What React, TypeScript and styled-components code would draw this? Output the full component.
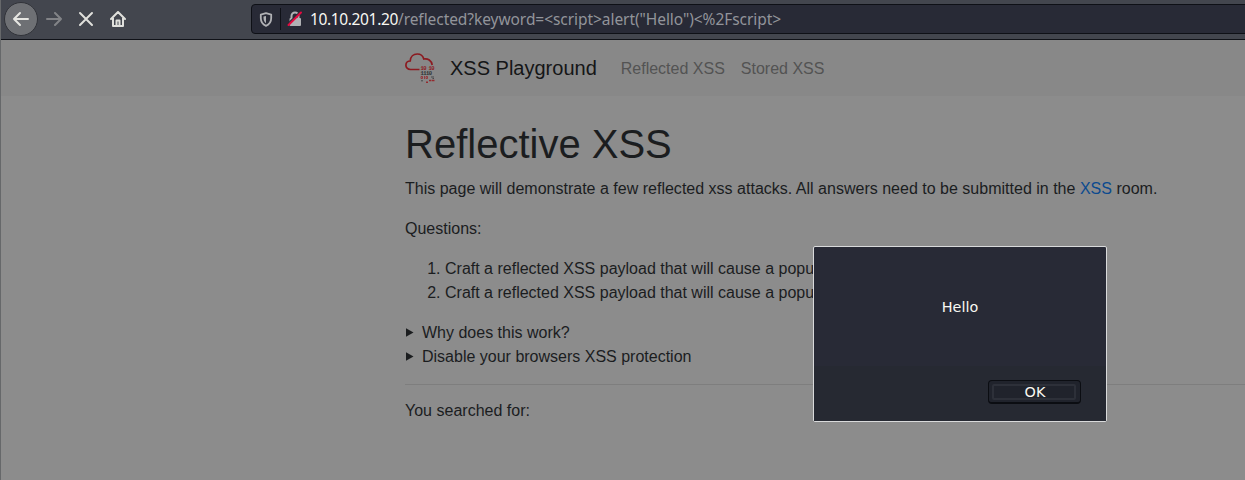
import React from "react";
import styled, { createGlobalStyle } from "styled-components";

const GlobalStyle = createGlobalStyle`
  *, *::before, *::after { box-sizing: border-box; }
  html, body { margin: 0; height: 100%; overflow: hidden; background: #8c8c8c; }
  body { font: 16px/24px "Liberation Sans", Arial, sans-serif; color: #1b1d1f; }
`;

const Browser = styled.div`
  position: relative;
  width: 1245px;
  height: 480px;
  overflow: hidden;
  display: flex;
  flex-direction: column;
  border-left: 1px solid #66686a;
`;

const Toolbar = styled.header`
  flex: none;
  height: 40px;
  display: flex;
  align-items: flex-start;
  background: #43464e;
  border-bottom: 1px solid #101218;
`;

const BackButton = styled.button`
  width: 34px;
  height: 34px;
  margin: 2px 0 0 3px;
  padding: 0;
  border: 1px solid #313339;
  border-radius: 50%;
  background: #6e7074;
  display: flex;
  align-items: center;
  justify-content: center;
`;

const ToolButton = styled.button<{ $dim?: boolean }>`
  width: 32px;
  height: 38px;
  padding: 0;
  border: 0;
  background: none;
  display: flex;
  align-items: center;
  justify-content: center;
  opacity: ${(p) => (p.$dim ? 0.4 : 1)};
`;

const AddressBar = styled.div`
  flex: 1;
  height: 30px;
  margin: 4px -6px 0 117px;
  padding-left: 7px;
  display: flex;
  align-items: center;
  background: #282a36;
  border: 1px solid #0e1016;
  border-radius: 4px;
`;

const Divider = styled.span`
  width: 1px;
  height: 22px;
  margin: 0 6px 0 7px;
  background: #0e1016;
`;

const Url = styled.span`
  margin-left: 7px;
  font: 15.5px/28px "Noto Sans", sans-serif;
  letter-spacing: -0.06px;
  color: #92949a;
  white-space: pre;
`;

const Host = styled.span`
  color: #f8f8f2;
  letter-spacing: -0.36px;
`;

const Navbar = styled.nav`
  flex: none;
  height: 56px;
  padding-left: 404px;
  display: flex;
  align-items: center;
  background: #888888;
`;

const Brand = styled.a`
  display: flex;
  align-items: center;
  gap: 15px;
  margin-right: 24px;
  font-size: 20px;
  line-height: 30px;
  color: #151617;
`;

const NavLink = styled.a`
  margin-right: 16px;
  padding-top: 2px;
  color: #535353;
`;

const Page = styled.main`
  flex: 1;
  padding: 24px 0 0 404px;
  background: #8c8c8c;
`;

const Title = styled.h1`
  margin: 0 0 9px;
  font-size: 40px;
  line-height: 48px;
  font-weight: 400;
`;

const Paragraph = styled.p`
  margin: 0 0 16px;
  letter-spacing: 0.008px;
`;

const Link = styled.a`
  color: #0b4a8f;
`;

const Questions = styled.ol`
  margin: 0 0 16px;
  padding-left: 40px;
  white-space: nowrap;
`;

const Disclosure = styled.div`
  display: flex;
  align-items: center;
  gap: 8px;
`;

const Rule = styled.hr`
  margin: 15px 0 13px;
  border: 0;
  border-top: 1px solid #7e7e7e;
`;

const Results = styled(Paragraph)`
  padding-top: 1px;
`;

const Dialog = styled.div`
  position: absolute;
  left: 812px;
  top: 246px;
  width: 294px;
  height: 176px;
  display: flex;
  flex-direction: column;
  background: #282a36;
  border: 1px solid #d9dadb;
  border-radius: 2px;
  font: 14.4px/20px "DejaVu Sans", sans-serif;
  color: #f8f8f2;
`;

const Message = styled.div`
  flex: 1;
  display: flex;
  align-items: center;
  justify-content: center;
`;

const Actions = styled.div`
  height: 55px;
  padding: 14px 25px 0 0;
  display: flex;
  justify-content: flex-end;
  align-items: flex-start;
  background: #262932;
`;

const OkButton = styled.button`
  width: 93px;
  height: 24px;
  padding: 3px 4px 2px 3px;
  border: 1px solid #0b0d12;
  border-bottom-width: 2px;
  border-radius: 4px;
  background: #20232c;
  color: inherit;
  font: inherit;
`;

const OkLabel = styled.span`
  display: block;
  height: 16px;
  padding-left: 2px;
  line-height: 13px;
  border: 2px solid #2d3039;
  border-radius: 2px;
`;

const BackIcon = () => (
  <svg width="18" height="16" viewBox="0 0 18 16" fill="none" stroke="#e6e6e2" strokeWidth="2" strokeLinecap="round" strokeLinejoin="round">
    <path d="M16 8H2M8 2L2 8l6 6" />
  </svg>
);

const ForwardIcon = () => (
  <svg width="18" height="16" viewBox="0 0 18 16" fill="none" stroke="#e0e0dc" strokeWidth="2" strokeLinecap="round" strokeLinejoin="round">
    <path d="M2 8h14M10 2l6 6-6 6" />
  </svg>
);

const StopIcon = () => (
  <svg width="16" height="16" viewBox="0 0 16 16" stroke="#e0e0dc" strokeWidth="2" strokeLinecap="round">
    <path d="M2 2l12 12M14 2L2 14" />
  </svg>
);

const HomeIcon = () => (
  <svg width="16" height="16" viewBox="0 0 16 16" fill="none" stroke="#e0e0dc" strokeWidth="2" strokeLinecap="round" strokeLinejoin="round">
    <path d="M1 8l7-7 7 7M3 7v8h10V7" />
    <path d="M6.5 14.5V9.5h3v5" />
  </svg>
);

const ShieldIcon = () => (
  <svg width="14" height="15" viewBox="0 0 14 15" fill="none">
    <path d="M7 1.2L12.2 2.6V6c0 3.8-2 6.5-5.2 7.8C3.8 12.500 1.800 9.800 1.800 6V2.600z" stroke="#b0b1b4" strokeWidth="1.8" strokeLinejoin="round" />
    <path d="M7 4v7.200C5.300 10 4.500 8.300 4.500 6V4.600z" fill="#b0b1b4" />
  </svg>
);

const InsecureIcon = () => (
  <svg width="16" height="16" viewBox="0 0 16 16" fill="none">
    <path d="M4.500 7V5a3.500 3.500 0 0 1 7 0v2" stroke="#b0b1b4" strokeWidth="2" />
    <rect x="2.500" y="7" width="11.500" height="8" rx="1" fill="#b0b1b4" />
    <path d="M.5 13L13.500 .5" stroke="#282a36" strokeWidth="1.500" />
    <path d="M1.500 14L14 1.500" stroke="#e5093f" strokeWidth="2" strokeLinecap="round" />
  </svg>
);

const LogoDigits = styled.text`
  font: 700 5.5px "Liberation Mono", monospace;
  white-space: pre;
`;

const CloudLogo = () => (
  <svg width="30" height="30" viewBox="0 0 30 30" fill="none">
    <path d="M14.500 16.500H5.500C2.600 16.500 .9 14.500 .9 12.200c0-2.400 1.800-4.200 4.300-4.200C5.500 3.500 8.500 1 12.200 1c3.400 0 5.800 1.800 6.600 5 4-.8 7.700 1.300 8.400 6" stroke="#8c1a20" strokeWidth="1.700" />
    <LogoDigits x="15.500" y="17" textLength="14" fill="#8c1a20">10 10</LogoDigits>
    <LogoDigits x="15.500" y="22.200" textLength="11.500" fill="#303234">1110</LogoDigits>
    <path d="M16 23.500v2h1.500v-2zM19.500 23v3M21 23.500v2h1.500v-2z" stroke="#942a2e" strokeWidth=".8" />
    <path d="M26 24h3M27.500 25.500H29M16 27.800h2" stroke="#47494b" />
    <path d="M24 27.500h5.500M21 29.300h2" stroke="#942a2e" strokeWidth="1.400" strokeDasharray="2.500 .5" />
  </svg>
);

const Triangle = () => (
  <svg width="9" height="10" viewBox="0 0 9 10">
    <path d="M1 .3L8.500 4.500 1 8.700z" fill="#1b1d1f" />
  </svg>
);

export default function App() {
  return (
    <Browser>
      <GlobalStyle />
      <Toolbar>
        <BackButton aria-label="Back"><BackIcon /></BackButton>
        <ToolButton $dim aria-label="Forward"><ForwardIcon /></ToolButton>
        <ToolButton aria-label="Stop"><StopIcon /></ToolButton>
        <ToolButton aria-label="Home"><HomeIcon /></ToolButton>
        <AddressBar>
          <ShieldIcon />
          <Divider />
          <InsecureIcon />
          <Url><Host>10.10.201.20</Host>{'/reflected?keyword=<script>alert("Hello")<%2Fscript>'}</Url>
        </AddressBar>
      </Toolbar>
      <Navbar>
        <Brand><CloudLogo />XSS Playground</Brand>
        <NavLink>Reflected XSS</NavLink>
        <NavLink>Stored XSS</NavLink>
      </Navbar>
      <Page>
        <Title>Reflective XSS</Title>
        <Paragraph>
          This page will demonstrate a few reflected xss attacks. All answers need to be submitted in the <Link>XSS</Link> room.
        </Paragraph>
        <Paragraph>Questions:</Paragraph>
        <Questions>
          <li>Craft a reflected XSS payload that will cause a popu</li>
          <li>Craft a reflected XSS payload that will cause a popu</li>
        </Questions>
        <Disclosure><Triangle />Why does this work?</Disclosure>
        <Disclosure><Triangle />Disable your browsers XSS protection</Disclosure>
        <Rule />
        <Results>You searched for:</Results>
      </Page>
      <Dialog role="alertdialog">
        <Message>Hello</Message>
        <Actions><OkButton><OkLabel>OK</OkLabel></OkButton></Actions>
      </Dialog>
    </Browser>
  );
}
